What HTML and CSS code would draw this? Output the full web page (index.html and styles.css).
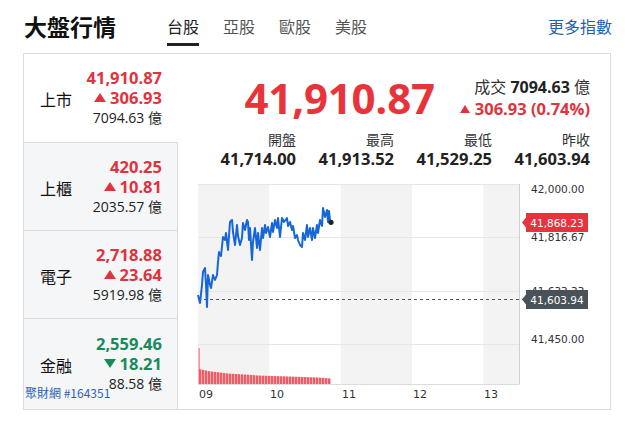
FILE: index.html
```html
<!DOCTYPE html>
<html lang="zh-Hant">
<head>
<meta charset="utf-8">
<title>大盤行情</title>
<link rel="stylesheet" href="styles.css">
</head>
<body>
<header class="header">
  <h1 class="title">大盤行情</h1>
  <nav class="tabs">
    <span class="tab active">台股</span>
    <span class="tab">亞股</span>
    <span class="tab">歐股</span>
    <span class="tab">美股</span>
  </nav>
  <a class="more">更多指數</a>
</header>

<section class="card">
  <div class="side">
    <div class="row active">
      <span class="name">上市</span>
      <div class="vals up">
        <div class="v1">41,910.87</div>
        <div class="v2"><span class="tri-up"></span>306.93</div>
        <div class="v3">7094.63 億</div>
      </div>
    </div>
    <div class="row">
      <span class="name">上櫃</span>
      <div class="vals up">
        <div class="v1">420.25</div>
        <div class="v2"><span class="tri-up"></span>10.81</div>
        <div class="v3">2035.57 億</div>
      </div>
    </div>
    <div class="row">
      <span class="name">電子</span>
      <div class="vals up">
        <div class="v1">2,718.88</div>
        <div class="v2"><span class="tri-up"></span>23.64</div>
        <div class="v3">5919.98 億</div>
      </div>
    </div>
    <div class="row last">
      <span class="name">金融</span>
      <div class="vals down">
        <div class="v1">2,559.46</div>
        <div class="v2"><span class="tri-down"></span>18.21</div>
        <div class="v3">88.58 億</div>
      </div>
    </div>
  </div>

  <div class="main">
    <div class="quote">
      <div class="big">41,910.87</div>
      <div class="sub">
        <div class="vol">成交 <b>7094.63</b> 億</div>
        <div class="chg"><span class="tri-up small"></span>306.93 (0.74%)</div>
      </div>
    </div>
    <div class="stats">
      <div class="stat"><div class="lbl">開盤</div><div class="val">41,714.00</div></div>
      <div class="stat"><div class="lbl">最高</div><div class="val">41,913.52</div></div>
      <div class="stat"><div class="lbl">最低</div><div class="val">41,529.25</div></div>
      <div class="stat"><div class="lbl">昨收</div><div class="val">41,603.94</div></div>
    </div>
    <svg class="chart" width="432" height="232" viewBox="0 0 432 232">
      <defs>
        <pattern id="vb" width="3" height="10" patternUnits="userSpaceOnUse">
          <rect width="3" height="10" fill="#f8b2b7"/>
          <rect width="2" height="10" fill="#ef5a65"/>
        </pattern>
      </defs>
      <rect x="20" y="9" width="71.3" height="200" fill="#f3f3f3"/>
      <rect x="162.7" y="9" width="71.3" height="200" fill="#f3f3f3"/>
      <rect x="305.3" y="9" width="35.7" height="200" fill="#f3f3f3"/>
      <g stroke="#e6e6e6" stroke-width="1">
        <line x1="20" y1="9.5" x2="341" y2="9.5"/>
        <line x1="20" y1="62.5" x2="341" y2="62.5"/>
        <line x1="20" y1="116.5" x2="341" y2="116.5"/>
        <line x1="20" y1="169.5" x2="341" y2="169.5"/>
      </g>
      <line x1="341.5" y1="9" x2="341.5" y2="209" stroke="#cfcfcf"/>
      <line x1="20" y1="209.5" x2="341.5" y2="209.5" stroke="#dcdcdc"/>
      <polygon points="20,209 20,173 21.6,173 21.6,194 30,196 50,198.5 80,200.5 110,201.5 140,202.5 153,203.5 153,209" fill="url(#vb)"/>
      <line x1="20" y1="124.5" x2="346" y2="124.5" stroke="#555" stroke-width="1" stroke-dasharray="3,3"/>
      <polyline fill="none" stroke="#1766d9" stroke-width="2" stroke-linejoin="round" points="20,120 22,128 24,110 25,97 27,93 28,110 29,132 30,100 32,110 33,113 35,100 37,105 39,100 40,87 41,77 43,81 45,62 47,65 48,58 50,75 52,47 54,45 55,57 57,70 59,50 60,61 62,70 64,63 65,48 67,55 69,45 70,47 71,65 72,53 74,85 75,67 77,53 79,73 80,58 82,75 84,53 85,63 87,50 88,58 90,52 92,62 94,48 95,57 97,45 99,53 100,43 102,62 104,43 106,47 109,43 110,51 112,47 114,55 115,51 117,63 119,60 120,65 122,70 124,72 125,58 127,65 129,50 130,62 132,53 134,65 135,53 137,63 139,50 140,58 142,45 144,51 145,33 147,42 149,35 150,47 151,36 152,45"/>
      <circle cx="153" cy="47.3" r="2.6" fill="#222"/>
      <g class="ylab">
        <text x="353" y="14">42,000.00</text>
        <text x="353" y="62">41,816.67</text>
        <text x="353" y="116">41,633.33</text>
        <text x="353" y="164">41,450.00</text>
      </g>
      <path d="M344,47.5 L348,42.5 L348,38 L410,38 L410,57 L348,57 L348,52.5 Z" fill="#e8333e"/>
      <text class="tag" x="379" y="47.5">41,868.23</text>
      <path d="M344,124.5 L348,119.5 L348,115 L410,115 L410,134 L348,134 L348,129.5 Z" fill="#4a5259"/>
      <text class="tag" x="379" y="124.5">41,603.94</text>
      <g class="xlab">
        <text x="21" y="219">09</text>
        <text x="92" y="219">10</text>
        <text x="164" y="219">11</text>
        <text x="235" y="219">12</text>
        <text x="306" y="219">13</text>
      </g>
    </svg>
  </div>
</section>

<div class="watermark">聚財網 #164351</div>
</body>
</html>
```

FILE: styles.css
```css
* { box-sizing: border-box; }

body {
  margin: 0;
  width: 625px;
  height: 422px;
  overflow: hidden;
  position: relative;
  background: #fff;
  color: #222;
  font-family: "Open Sans", "Noto Sans CJK TC", sans-serif;
}

.header {
  display: flex;
  align-items: flex-start;
  height: 53px;
  padding: 12px 13px 0 24px;
}

.title {
  margin: 0;
  font-size: 23px;
  line-height: 28px;
  font-weight: 700;
  font-family: "Noto Sans CJK TC", sans-serif;
  color: #111;
}

.tabs {
  display: flex;
  gap: 24px;
  margin: 4px 0 0 51px;
}

.tab {
  font-family: "Noto Sans CJK TC", sans-serif;
  font-size: 16px;
  line-height: 21px;
  color: #555;
  padding-bottom: 6px;
  border-bottom: 3px solid transparent;
}

.tab.active {
  color: #222;
  border-bottom-color: #222;
}

.more {
  margin: 4px 0 0 auto;
  font-family: "Noto Sans CJK TC", sans-serif;
  font-size: 16px;
  line-height: 21px;
  color: #1f5fae;
}

.card {
  display: flex;
  margin-left: 23px;
  width: 588px;
  height: 357px;
  border: 1px solid #dcdcdc;
}

.side {
  display: flex;
  flex-direction: column;
  width: 154px;
  flex-shrink: 0;
}

.row {
  display: flex;
  align-items: center;
  justify-content: space-between;
  height: 88px;
  padding: 0 15px 0 16px;
  background: #f5f6f8;
  border-top: 1px solid #dcdcdc;
  border-right: 1px solid #dcdcdc;
}

.row.active {
  background: #fff;
  border-top: none;
  border-right-color: transparent;
}

.row.last {
  flex: 1;
  height: auto;
}

.name {
  font-family: "Noto Sans CJK TC", sans-serif;
  font-size: 16px;
  color: #111;
  padding-top: 2px;
}

.vals {
  text-align: right;
}

.v1, .v2 {
  font-size: 16.5px;
  font-weight: 700;
  line-height: 20px;
}

.v3 {
  font-size: 14px;
  line-height: 20px;
  color: #222;
}

.up .v1, .up .v2 { color: #e0333d; }
.down .v1, .down .v2 { color: #178c5a; }

.tri-up, .tri-down {
  display: inline-block;
  width: 0;
  height: 0;
  margin-right: 4px;
  vertical-align: 2px;
  border-left: 6px solid transparent;
  border-right: 6px solid transparent;
}

.tri-up { border-bottom: 9px solid currentColor; }
.tri-down { border-top: 9px solid currentColor; }

.tri-up.small {
  margin-right: 5px;
  border-left-width: 5.5px;
  border-right-width: 5.5px;
  border-bottom-width: 8px;
}

.main {
  flex: 1;
  display: flex;
  flex-direction: column;
}

.quote {
  display: flex;
  justify-content: flex-end;
  align-items: center;
  gap: 25px;
  height: 50px;
  margin-top: 19px;
  padding-right: 20px;
}

.big {
  font-size: 42px;
  line-height: 50px;
  font-weight: 700;
  color: #e8333a;
  letter-spacing: -0.2px;
}

.sub {
  text-align: right;
  font-size: 16px;
  line-height: 21px;
}

.vol { color: #333; }
.vol b { color: #222; font-weight: 700; }

.chg {
  color: #e0333d;
  font-weight: 700;
  font-size: 16.5px;
}

.stats {
  display: grid;
  grid-template-columns: repeat(4, 98px);
  justify-content: end;
  margin-top: 6px;
  padding-right: 20px;
}

.stat { text-align: right; }

.lbl {
  font-family: "Noto Sans CJK TC", sans-serif;
  font-size: 14px;
  line-height: 20px;
  color: #333;
}

.val {
  font-size: 16.5px;
  line-height: 20px;
  font-weight: 700;
  color: #222;
}

.chart {
  display: block;
  margin-top: 6px;
}

.ylab text, .xlab text, .tag {
  font-family: "DejaVu Sans", sans-serif;
  dominant-baseline: central;
}

.ylab text {
  font-size: 10.5px;
  fill: #333;
}

.xlab text {
  font-size: 11px;
  fill: #333;
}

.tag {
  font-size: 10.5px;
  fill: #fff;
  text-anchor: middle;
}

.watermark {
  position: absolute;
  left: 25px;
  top: 386px;
  font-family: "Noto Sans CJK TC", sans-serif;
  font-size: 12px;
  line-height: 14px;
  color: #2b63b3;
}
```
